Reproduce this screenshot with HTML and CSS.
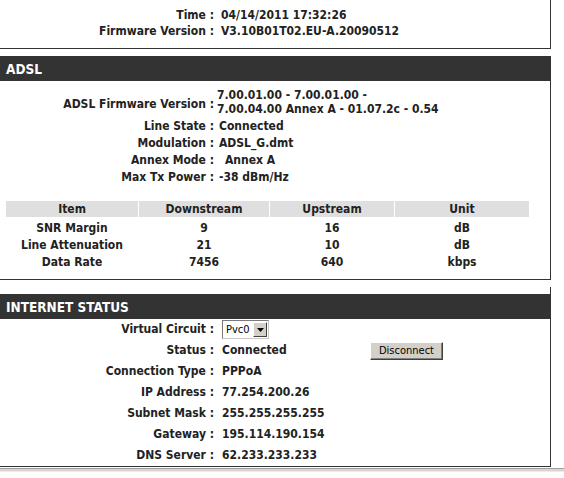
FILE: index.html
```html
<!DOCTYPE html>
<html lang="en">

<head>
    <meta charset="UTF-8">
    <title>Device Info</title>
    <link rel="stylesheet" href="styles.css">
</head>

<body>
    <div class="page">
        <div class="box box-top">
            <div class="row"><span class="lbl">Time :</span><span class="val">04/14/2011 17:32:26</span></div>
            <div class="row"><span class="lbl">Firmware Version :</span><span class="val">V3.10B01T02.EU-A.20090512</span></div>
        </div>

        <div class="box box-adsl">
            <h2 class="box-title">ADSL</h2>
            <div class="row row-fw">
                <span class="lbl">ADSL Firmware Version :</span>
                <span class="val">7.00.01.00 - 7.00.01.00 -<br>7.00.04.00 Annex A - 01.07.2c - 0.54</span>
            </div>
            <div class="row row-adsl"><span class="lbl">Line State :</span><span class="val">Connected</span></div>
            <div class="row row-adsl"><span class="lbl">Modulation :</span><span class="val">ADSL_G.dmt</span></div>
            <div class="row row-adsl"><span class="lbl">Annex Mode :</span><span class="val val-annex">Annex A</span></div>
            <div class="row row-adsl"><span class="lbl">Max Tx Power :</span><span class="val">-38 dBm/Hz</span></div>

            <table class="stats">
                <colgroup>
                    <col style="width: 132px">
                    <col style="width: 130px">
                    <col style="width: 124px">
                    <col style="width: 134px">
                </colgroup>
                <thead>
                    <tr>
                        <th>Item</th>
                        <th>Downstream</th>
                        <th>Upstream</th>
                        <th>Unit</th>
                    </tr>
                </thead>
                <tbody>
                    <tr><td>SNR Margin</td><td>9</td><td>16</td><td>dB</td></tr>
                    <tr><td>Line Attenuation</td><td>21</td><td>10</td><td>dB</td></tr>
                    <tr><td>Data Rate</td><td>7456</td><td>640</td><td>kbps</td></tr>
                </tbody>
            </table>
        </div>

        <div class="box box-inet">
            <h2 class="box-title">INTERNET STATUS</h2>
            <div class="row row-inet">
                <span class="lbl">Virtual Circuit :</span>
                <span class="val">
                    <span class="select">
                        <span class="select-text">Pvc0</span>
                        <span class="select-btn">
                            <svg width="7" height="4" viewBox="0 0 7 4"><path d="M0 0h7L3.5 4z" fill="#000"/></svg>
                        </span>
                    </span>
                </span>
            </div>
            <div class="row row-inet">
                <span class="lbl">Status :</span>
                <span class="val"><span class="val-status">Connected</span><button class="btn">Disconnect</button></span>
            </div>
            <div class="row row-inet"><span class="lbl">Connection Type :</span><span class="val">PPPoA</span></div>
            <div class="row row-inet"><span class="lbl">IP Address :</span><span class="val">77.254.200.26</span></div>
            <div class="row row-inet"><span class="lbl">Subnet Mask :</span><span class="val">255.255.255.255</span></div>
            <div class="row row-inet"><span class="lbl">Gateway :</span><span class="val">195.114.190.154</span></div>
            <div class="row row-inet"><span class="lbl">DNS Server :</span><span class="val">62.233.233.233</span></div>
        </div>
    </div>
    <div class="hbar"></div>
</body>

</html>
```

FILE: styles.css
```css
* {
    box-sizing: border-box;
}

body {
    margin: 0;
    background: #fff;
    color: #222;
    font-family: "DejaVu Sans Condensed", "DejaVu Sans", sans-serif;
    font-size: 12px;
    font-weight: bold;
    overflow: hidden;
}

.page {
    width: 552px;
    margin-left: -1px;
}

.box {
    border: 1px solid #333;
    border-top: none;
    margin-top: 7px;
}

.box-top {
    margin-top: 0;
    padding: 7px 0 9px;
}

.box-title {
    margin: 0;
    height: 25px;
    line-height: 26px;
    padding-left: 6px;
    background: #333;
    color: #fff;
    font-size: 13.5px;
    font-weight: bold;
}

.row {
    display: grid;
    grid-template-columns: 214px 1fr;
    column-gap: 7px;
    align-items: center;
    line-height: 16px;
}

.lbl {
    text-align: right;
    white-space: nowrap;
}

.val {
    white-space: nowrap;
}

/* ADSL */
.box-adsl {
    padding-bottom: 8px;
}

.row-fw {
    margin-top: 7px;
    column-gap: 3px;
    line-height: 14px;
}

.row-fw .lbl {
    padding-top: 3px;
}

.row-fw + .row-adsl {
    margin-top: 2px;
}

.row-adsl {
    line-height: 17px;
    column-gap: 5px;
}

.val-annex {
    padding-left: 6px;
}

.stats {
    margin: 15px 0 0 5px;
    width: 525px;
    table-layout: fixed;
    border-collapse: separate;
    border-spacing: 1px 0;
    text-align: center;
}

.stats th {
    height: 19px;
    padding: 1px 0 0;
    background: #dfdfdf;
    border-bottom: 3px solid #fff;
    line-height: 15px;
    font-weight: bold;
}

.stats td {
    padding: 0;
    line-height: 17px;
}

/* Internet status */
.box-inet {
    padding-top: 7px;
}

.row-inet {
    height: 21px;
    line-height: 21px;
    column-gap: 8px;
}

.select {
    display: inline-flex;
    align-items: center;
    vertical-align: middle;
    width: 47px;
    height: 19px;
    border: 1px solid #7a7a7a;
    border-right-color: #c8c8c8;
    border-bottom-color: #c8c8c8;
    background: #fff;
    padding: 1px;
}

.select-text {
    flex: 1;
    padding-left: 2px;
    font-family: Tahoma, "DejaVu Sans Condensed", sans-serif;
    font-size: 11px;
    font-weight: normal;
    line-height: 15px;
    color: #000;
}

.select-btn {
    display: flex;
    align-items: center;
    justify-content: center;
    width: 14px;
    height: 15px;
    background: #d4d0c8;
    border: 1px solid;
    border-color: #fff #404040 #404040 #fff;
}

.val-status {
    display: inline-block;
    width: 148px;
}

.btn {
    width: 73px;
    height: 18px;
    padding: 0;
    vertical-align: middle;
    background: #d4d0c8;
    border: 1px solid;
    border-color: #fff #404040 #404040 #fff;
    box-shadow: inset -1px -1px 0 #808080;
    font-family: "DejaVu Sans Condensed", sans-serif;
    font-size: 11px;
    font-weight: normal;
    color: #000;
}

.hbar {
    margin-top: 1px;
    height: 11px;
    border-top: 1px solid #a0a0a0;
    background: linear-gradient(#d8d6cf 0, #d8d6cf 2px, #fff 3px);
}
```
